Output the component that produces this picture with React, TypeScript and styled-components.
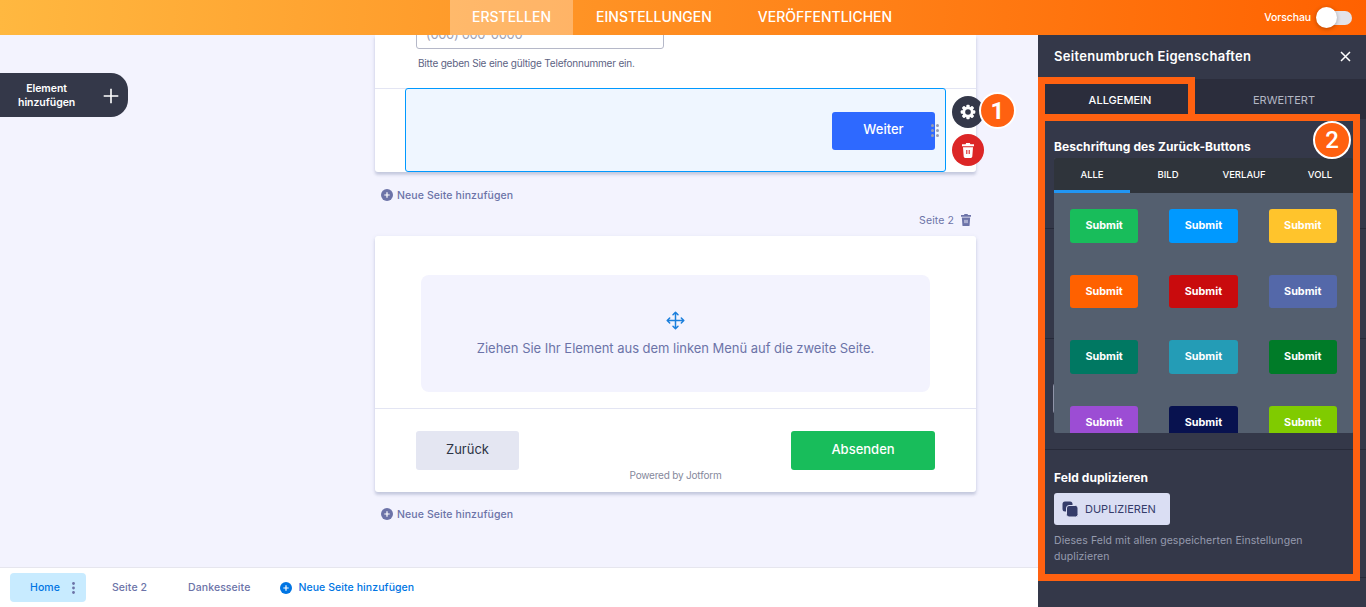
import React from 'react';
import styled, {createGlobalStyle} from 'styled-components';

const GlobalStyle = createGlobalStyle`
    * {
        box-sizing: border-box;
    }
    body {
        margin: 0;
        overflow: hidden;
        font-family: Inter, "Liberation Sans", sans-serif;
    }
    button {
        font-family: inherit;
        border: 0;
        padding: 0;
    }
`;

const Screen = styled.div`
    position: relative;
    display: flex;
    flex-direction: column;
    width: 1366px;
    height: 607px;
    overflow: hidden;
`;

/* Top bar */
const TopBar = styled.header`
    position: relative;
    z-index: 2;
    flex: none;
    display: grid;
    grid-template-columns: 450px 1fr 451px;
    height: 35px;
    background: linear-gradient(93deg, #ffb840 0%, #ff6100 100%);
`;

const Nav = styled.nav`
    grid-column: 2;
    display: flex;
`;

const NavItem = styled.a<{$width: number; $active?: boolean}>`
    flex: none;
    width: ${props => props.$width}px;
    line-height: 33px;
    text-align: center;
    font-size: 14px;
    font-weight: 500;
    color: #fff;
    background: ${props => (props.$active ? 'rgba(255, 255, 255, 0.3)' : 'transparent')};
`;

const Preview = styled.div`
    display: flex;
    align-items: center;
    justify-content: flex-end;
    gap: 6px;
    padding-right: 14px;
    font-size: 10.5px;
    letter-spacing: -0.1px;
    font-weight: 500;
    color: #fff;
`;

const Switch = styled.div`
    display: flex;
    align-items: center;
    width: 35px;
    height: 14px;
    border-radius: 7px;
    background: #e3e3e9;
`;

const Knob = styled.div`
    flex: none;
    width: 21px;
    height: 21px;
    margin-left: -1px;
    border-radius: 50%;
    background: #fff;
    box-shadow: 0 1px 4px rgba(0, 0, 0, 0.3);
`;

/* Builder */
const Main = styled.div`
    flex: 1;
    display: flex;
    min-height: 0;
`;

const Builder = styled.div`
    width: 1038px;
    display: flex;
    flex-direction: column;
    background: #f3f3fe;
`;

const Canvas = styled.div`
    flex: 1;
    min-height: 0;
    display: flex;
`;

const LeftRail = styled.div`
    width: 375px;
    padding-top: 38px;
`;

const AddElement = styled.button`
    display: flex;
    align-items: center;
    justify-content: space-between;
    width: 128px;
    height: 44px;
    padding: 1px 9px 0 18px;
    border-radius: 0 17px 17px 0;
    background: #343849;
    color: #fff;
    font-size: 10.5px;
    letter-spacing: -0.05px;
    line-height: 14px;
    font-weight: 600;
`;

const FormColumn = styled.div`
    width: 601px;
`;

const PageCard = styled.section<{$height: number; $first?: boolean}>`
    position: relative;
    height: ${props => props.$height}px;
    border-radius: ${props => (props.$first ? '0 0 3px 3px' : '3px')};
    background: #fff;
    box-shadow: 0 3px 3px rgba(84, 95, 140, 0.22), 0 1px 4px rgba(84, 95, 140, 0.12);
`;

const PhoneField = styled.div`
    height: 53px;
    padding-left: 41px;
    overflow: hidden;
`;

const PhoneInput = styled.div`
    width: 248px;
    height: 38px;
    margin-top: -24px;
    padding-left: 9px;
    border: 1px solid #b5b8c8;
    border-radius: 3px;
    line-height: 44px;
    font-size: 13px;
    letter-spacing: -0.35px;
    color: #9fa3b5;
`;

const SubLabel = styled.div`
    padding: 7px 0 0 2px;
    font-size: 10px;
    line-height: 15px;
    color: #5d6383;
    letter-spacing: -0.19px;
`;

const BreakRow = styled.div`
    display: flex;
    height: 84px;
    padding-left: 30px;
    background: linear-gradient(#e3e5f3, #e3e5f3) top / 100% 1px no-repeat;
`;

const SelectedField = styled.div`
    position: relative;
    display: flex;
    align-items: flex-start;
    justify-content: flex-end;
    width: 541px;
    height: 84px;
    padding: 23px 10px 0 0;
    border: 1px solid #0099ff;
    border-radius: 3px;
    background: #eff6ff;
`;

const FormButton = styled.button<{$width: number; $color: string; $text?: string; $height?: number}>`
    width: ${props => props.$width}px;
    height: ${props => props.$height ?? 39}px;
    padding-bottom: 4px;
    border-radius: 3px;
    background: ${props => props.$color};
    color: ${props => props.$text ?? '#fff'};
    font-size: 13px;
    font-weight: ${props => (props.$text ? 400 : 500)};
`;

const DragHandle = styled.div`
    position: absolute;
    right: 6px;
    top: 35px;
    display: grid;
    grid-template-columns: 3px 3px;
    gap: 2px;

    i {
        height: 3px;
        border-radius: 50%;
        background: #969db3;
    }
`;

const FieldActions = styled.div`
    position: absolute;
    left: 577px;
    top: 61px;
    display: flex;
    flex-direction: column;
    gap: 6px;
`;

const RoundButton = styled.button<{$color: string}>`
    display: flex;
    align-items: center;
    justify-content: center;
    width: 32px;
    height: 32px;
    border-radius: 50%;
    background: ${props => props.$color};
    color: #fff;
`;

const AddPage = styled.div<{$top: number}>`
    display: flex;
    align-items: center;
    gap: 4px;
    height: 14px;
    margin-top: ${props => props.$top}px;
    padding-left: 6px;
    font-size: 10.5px;
    font-weight: 500;
    letter-spacing: 0.1px;
    color: #6c73a8;
`;

const PageLabel = styled.div`
    display: flex;
    align-items: center;
    justify-content: flex-end;
    gap: 7px;
    height: 14px;
    margin: 11px 5px 9px 0;
    font-size: 10.5px;
    letter-spacing: 0.1px;
    color: #6c73a8;
`;

const DropZone = styled.div`
    display: flex;
    flex-direction: column;
    align-items: center;
    width: 509px;
    height: 117px;
    margin: 0 46px 16px;
    padding-top: 36px;
    border-radius: 8px;
    background: #f3f3fe;
    color: #6c73a8;
    font-size: 13px;
    letter-spacing: -0.03px;
    line-height: 18px;
    gap: 9px;
`;

const DropSpacer = styled.div`
    height: 39px;
`;

const PageFooter = styled.footer`
    display: flex;
    justify-content: space-between;
    padding: 22px 41px 0;
    border-top: 1px solid #e3e5f3;
`;

const Powered = styled.span`
    padding-top: 37px;
    margin-left: 41px;
    font-size: 10px;
    letter-spacing: -0.2px;
    line-height: 15px;
    color: #85889b;
`;

const PageTabs = styled.div`
    flex: none;
    display: flex;
    align-items: center;
    height: 40px;
    padding-left: 10px;
    border-top: 1px solid #e6e6ee;
    background: #fff;
    font-size: 10.5px;
    font-weight: 500;
    letter-spacing: 0.08px;
    color: #6c73a8;
`;

const HomeTab = styled.div`
    display: flex;
    align-items: center;
    justify-content: space-between;
    width: 76px;
    height: 29px;
    padding: 0 10px 0 20px;
    border-radius: 4px;
    background: #c8ebff;
    color: #0075e3;
`;

const PageTab = styled.div<{$left: number}>`
    margin-left: ${props => props.$left}px;
`;

const NewPageTab = styled.div`
    display: flex;
    align-items: center;
    gap: 6px;
    margin-left: 30px;
    color: #0075e3;
`;

/* Properties panel */
const Panel = styled.aside`
    position: relative;
    width: 328px;
    background: #343849;
    color: #fff;
`;

const PanelHead = styled.div`
    display: flex;
    align-items: center;
    justify-content: space-between;
    height: 44px;
    padding: 0 15px 2px 16px;
    font-size: 13px;
    font-weight: 600;
    letter-spacing: 0.3px;
`;

const PanelTabs = styled.div`
    display: grid;
    grid-template-columns: 1fr 1fr;
    height: 40px;
    background: #2b2d3c;
`;

const PanelTab = styled.div<{$active?: boolean}>`
    line-height: 43px;
    text-align: center;
    font-size: 11px;
    font-weight: ${props => (props.$active ? 500 : 400)};
    color: ${props => (props.$active ? '#fff' : '#b3b7c4')};
`;

const Section = styled.div<{$height: number}>`
    height: ${props => props.$height}px;
    padding: 20px 16px 0;
    border-bottom: 1px solid #272a39;
`;

const HiddenInput = styled.div`
    height: 31px;
    margin: 24px 12px 0 -1px;
    border: 1px solid #8f94a8;
    border-radius: 3px;
`;

const SectionTitle = styled.div`
    font-size: 12px;
    line-height: 16px;
    font-weight: 700;
    letter-spacing: 0.06px;
`;

const Picker = styled.div`
    position: absolute;
    left: 16px;
    top: 123px;
    width: 300px;
    height: 275px;
    overflow: hidden;
    border-radius: 2px;
    background: #545f6f;
`;

const PickerTabs = styled.div`
    display: flex;
    height: 35px;
    background: #2f343b;
`;

const PickerTab = styled.div<{$active?: boolean}>`
    flex: none;
    width: 76px;
    height: 35px;
    border-bottom: 3px solid ${props => (props.$active ? '#2196f3' : 'transparent')};
    line-height: 34px;
    text-align: center;
    font-size: 9.5px;
    font-weight: 500;
`;

const Swatches = styled.div`
    display: grid;
    grid-template-columns: repeat(3, 68.3px);
    column-gap: 31px;
    row-gap: 32px;
    padding: 16px;
`;

const Swatch = styled.button<{$color: string}>`
    height: 33.5px;
    border-radius: 3px;
    background: ${props => props.$color};
    color: #fff;
    font-size: 10.8px;
    font-weight: 700;
`;

const DuplicateButton = styled.button`
    display: flex;
    align-items: center;
    gap: 7px;
    width: 116px;
    height: 32px;
    margin: 7px 0 8px;
    padding-left: 8px;
    border-radius: 3px;
    background: #dadef3;
    color: #343c6a;
    font-size: 11px;
`;

const Hint = styled.div`
    font-size: 10.5px;
    line-height: 16px;
    letter-spacing: 0.07px;
    color: #969bae;
`;

/* Guide marks drawn over the page */
const Frame = styled.div<{$top: number; $width: number; $height: number}>`
    position: absolute;
    z-index: 3;
    left: 1038px;
    top: ${props => props.$top}px;
    width: ${props => props.$width}px;
    height: ${props => props.$height}px;
    border: 7px solid #ff6110;
`;

const StepBadge = styled.div<{$left: number; $top: number; $size: number; $bold?: boolean}>`
    position: absolute;
    z-index: 4;
    left: ${props => props.$left}px;
    top: ${props => props.$top}px;
    display: flex;
    align-items: center;
    justify-content: center;
    width: ${props => props.$size}px;
    height: ${props => props.$size}px;
    border: 2px solid #fff;
    border-radius: 50%;
    background: #ff6110;
    color: #fff;
    font-family: Roboto, sans-serif;
    font-size: 24px;
    font-weight: ${props => (props.$bold ? 700 : 500)};
`;

const PlusCircle = () => (
    <svg width="12" height="12" viewBox="0 0 12 12">
        <circle cx="6" cy="6" r="6" fill="currentColor" />
        <path d="M6 3.3v5.4M3.3 6h5.4" stroke="#fff" strokeWidth="1.2" />
    </svg>
);

const Trash = ({width, hole}: {width: number; hole: string}) => (
    <svg width={width} height={(width * 15) / 12} viewBox="0 0 12 15">
        <path d="M0 1.2h3.6L4.2 0h3.6l.6 1.2H12v2H0z" fill="currentColor" />
        <path d="M1 4.2h10l-.7 9.4a1.5 1.5 0 0 1-1.5 1.4H3.2a1.5 1.5 0 0 1-1.5-1.4z" fill="currentColor" />
        <path d="M4.8 7v4M7.2 7v4" stroke={hole} strokeWidth="1.1" />
    </svg>
);

const Gear = () => (
    <svg width="16" height="16" viewBox="0 0 16 16">
        <g fill="currentColor">
            {[0, 45, 90, 135].map(angle => (
                <rect key={angle} x="6.3" y="0.7" width="3.4" height="14.6" rx="1" transform={`rotate(${angle} 8 8)`} />
            ))}
            <circle cx="8" cy="8" r="5.5" />
        </g>
        <circle cx="8" cy="8" r="2.8" fill="#343849" />
    </svg>
);

const swatchColors = [
    '#18bd5b', '#0099ff', '#ffc42c',
    '#ff6100', '#c90b0d', '#5468a9',
    '#007862', '#249cb6', '#007b28',
    '#9c4dd4', '#08124f', '#80cb00'
];

const App = (): React.JSX.Element => {
    return (
        <Screen>
            <GlobalStyle />
            <TopBar>
                <Nav>
                    <NavItem $width={123} $active>ERSTELLEN</NavItem>
                    <NavItem $width={162}>EINSTELLUNGEN</NavItem>
                    <NavItem $width={180}>VERÖFFENTLICHEN</NavItem>
                </Nav>
                <Preview>
                    Vorschau
                    <Switch><Knob /></Switch>
                </Preview>
            </TopBar>
            <Main>
                <Builder>
                    <Canvas>
                        <LeftRail>
                            <AddElement>
                                <span>Element<br />hinzufügen</span>
                                <svg width="16" height="16" viewBox="0 0 16 16">
                                    <path d="M8 .7v14.6M.7 8h14.6" stroke="#fff" strokeWidth="1.6" />
                                </svg>
                            </AddElement>
                        </LeftRail>
                        <FormColumn>
                            <PageCard $height={137} $first>
                                <PhoneField>
                                    <PhoneInput>(000) 000-0000</PhoneInput>
                                    <SubLabel>Bitte geben Sie eine gültige Telefonnummer ein.</SubLabel>
                                </PhoneField>
                                <BreakRow>
                                    <SelectedField>
                                        <FormButton $width={103} $height={38} $color="#2e69ff">Weiter</FormButton>
                                        <DragHandle><i /><i /><i /><i /><i /><i /></DragHandle>
                                    </SelectedField>
                                </BreakRow>
                                <FieldActions>
                                    <RoundButton $color="#343849"><Gear /></RoundButton>
                                    <RoundButton $color="#dc2626"><Trash width={12} hole="#dc2626" /></RoundButton>
                                </FieldActions>
                            </PageCard>
                            <AddPage $top={16}><PlusCircle />Neue Seite hinzufügen</AddPage>
                            <PageLabel>Seite 2 <Trash width={10} hole="#f3f3fe" /></PageLabel>
                            <PageCard $height={256}>
                                <DropSpacer />
                                <DropZone>
                                    <svg width="19" height="19" viewBox="0 0 19 19" fill="none" stroke="#1b7fdc" strokeWidth="1.5" strokeLinecap="round" strokeLinejoin="round">
                                        <path d="M9.5 1.5v16M1.5 9.5h16M7 3.7l2.5-2.5L12 3.7M7 15.3l2.5 2.5 2.5-2.5M3.7 7L1.2 9.5 3.7 12M15.3 7l2.5 2.5-2.5 2.5" />
                                    </svg>
                                    Ziehen Sie Ihr Element aus dem linken Menü auf die zweite Seite.
                                </DropZone>
                                <PageFooter>
                                    <FormButton $width={103} $color="#e4e6f2" $text="#2c3345">Zurück</FormButton>
                                    <Powered>Powered by Jotform</Powered>
                                    <FormButton $width={144} $color="#18bd5b">Absenden</FormButton>
                                </PageFooter>
                            </PageCard>
                            <AddPage $top={15}><PlusCircle />Neue Seite hinzufügen</AddPage>
                        </FormColumn>
                    </Canvas>
                    <PageTabs>
                        <HomeTab>
                            Home
                            <svg width="5" height="12" viewBox="0 0 5 12" fill="#6c73a8">
                                <circle cx="2.5" cy="1.5" r="1.4" />
                                <circle cx="2.5" cy="6" r="1.4" />
                                <circle cx="2.5" cy="10.5" r="1.4" />
                            </svg>
                        </HomeTab>
                        <PageTab $left={26}>Seite 2</PageTab>
                        <PageTab $left={41}>Dankesseite</PageTab>
                        <NewPageTab><PlusCircle />Neue Seite hinzufügen</NewPageTab>
                    </PageTabs>
                </Builder>
                <Panel>
                    <PanelHead>
                        Seitenumbruch Eigenschaften
                        <svg width="11" height="11" viewBox="0 0 11 11">
                            <path d="M1 1l9 9M10 1l-9 9" stroke="#fff" strokeWidth="1.5" />
                        </svg>
                    </PanelHead>
                    <PanelTabs>
                        <PanelTab $active>ALLGEMEIN</PanelTab>
                        <PanelTab>ERWEITERT</PanelTab>
                    </PanelTabs>
                    <Section $height={110}>
                        <SectionTitle>Beschriftung des Zurück-Buttons</SectionTitle>
                    </Section>
                    <Section $height={110} />
                    <Section $height={111}><HiddenInput /></Section>
                    <Section $height={128}>
                        <SectionTitle>Feld duplizieren</SectionTitle>
                        <DuplicateButton>
                            <svg width="16" height="16" viewBox="0 0 16 16">
                                <rect x="0.5" y="0.5" width="10" height="10" rx="2.5" fill="#343c6a" />
                                <rect x="4.5" y="4.5" width="11.5" height="11.5" rx="2.5" fill="#343c6a" stroke="#dadef3" />
                            </svg>
                            DUPLIZIEREN
                        </DuplicateButton>
                        <Hint>Dieses Feld mit allen gespeicherten Einstellungen duplizieren</Hint>
                    </Section>
                    <Picker>
                        <PickerTabs>
                            <PickerTab $active>ALLE</PickerTab>
                            <PickerTab>BILD</PickerTab>
                            <PickerTab>VERLAUF</PickerTab>
                            <PickerTab>VOLL</PickerTab>
                        </PickerTabs>
                        <Swatches>
                            {swatchColors.map(color => <Swatch key={color} $color={color}>Submit</Swatch>)}
                        </Swatches>
                    </Picker>
                </Panel>
            </Main>
            <Frame $top={77} $width={157} $height={44} />
            <Frame $top={114} $width={322} $height={467} />
            <StepBadge $left={979} $top={92} $size={37} $bold>1</StepBadge>
            <StepBadge $left={1313} $top={121} $size={38}>2</StepBadge>
        </Screen>
    );
};

export default App;
